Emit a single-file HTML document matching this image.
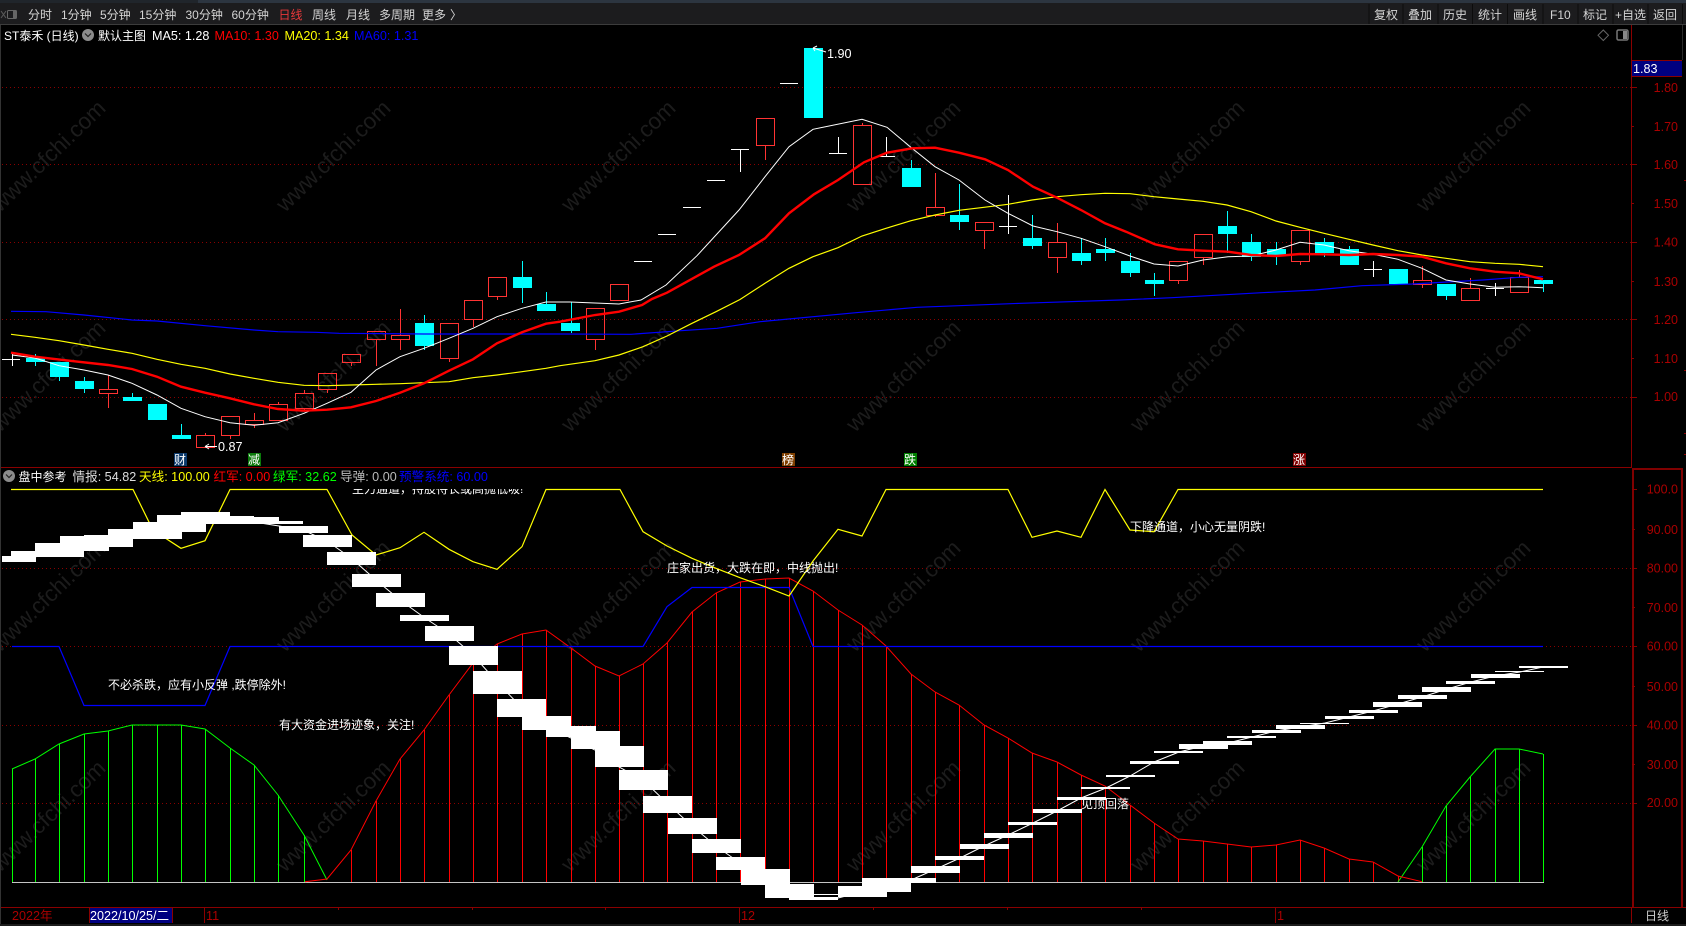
<!DOCTYPE html>
<html lang="zh"><head><meta charset="utf-8"><title>ST泰禾</title>
<style>
html,body{margin:0;padding:0;background:#000;width:1686px;height:926px;overflow:hidden}
svg{position:absolute;left:0;top:0;display:block}
text{font-family:"Liberation Sans","Noto Sans CJK SC",sans-serif;font-size:12.6px;fill:#fff}
.tb text{font-size:12px;fill:#d4d4d4}
.ax text{font-size:12.5px;fill:#aa0000;text-anchor:end}
.wm text{font-size:22.5px;fill:#1c1c1c}
.sig text{font-size:12px;fill:#fff}
.lg text{font-size:12.6px}
.lg text.z{font-size:12px}
.c{shape-rendering:crispEdges}
</style></head><body>
<svg width="1686" height="926" viewBox="0 0 1686 926" xmlns="http://www.w3.org/2000/svg">
<rect width="1686" height="926" fill="#000"/>
<!-- watermark -->
<g class="wm">
<text transform="translate(0 213) rotate(-44)">www.cfchi.com</text><text transform="translate(285 213) rotate(-44)">www.cfchi.com</text><text transform="translate(570 213) rotate(-44)">www.cfchi.com</text><text transform="translate(855 213) rotate(-44)">www.cfchi.com</text><text transform="translate(1139 213) rotate(-44)">www.cfchi.com</text><text transform="translate(1425 213) rotate(-44)">www.cfchi.com</text>
<text transform="translate(0 433) rotate(-44)">www.cfchi.com</text><text transform="translate(285 433) rotate(-44)">www.cfchi.com</text><text transform="translate(570 433) rotate(-44)">www.cfchi.com</text><text transform="translate(855 433) rotate(-44)">www.cfchi.com</text><text transform="translate(1139 433) rotate(-44)">www.cfchi.com</text><text transform="translate(1425 433) rotate(-44)">www.cfchi.com</text>
<text transform="translate(0 653) rotate(-44)">www.cfchi.com</text><text transform="translate(285 653) rotate(-44)">www.cfchi.com</text><text transform="translate(570 653) rotate(-44)">www.cfchi.com</text><text transform="translate(855 653) rotate(-44)">www.cfchi.com</text><text transform="translate(1139 653) rotate(-44)">www.cfchi.com</text><text transform="translate(1425 653) rotate(-44)">www.cfchi.com</text>
<text transform="translate(0 873) rotate(-44)">www.cfchi.com</text><text transform="translate(285 873) rotate(-44)">www.cfchi.com</text><text transform="translate(570 873) rotate(-44)">www.cfchi.com</text><text transform="translate(855 873) rotate(-44)">www.cfchi.com</text><text transform="translate(1139 873) rotate(-44)">www.cfchi.com</text><text transform="translate(1425 873) rotate(-44)">www.cfchi.com</text>
</g>
<!-- grid -->
<path class="c" d="M2 87.5H1631M2 164.5H1631M2 242.5H1631M2 319.5H1631M2 397.5H1631M2 568.5H1631M2 646.5H1631M2 725.5H1631M2 803.5H1631" stroke="#8a0000" stroke-width="1" stroke-dasharray="1 3" fill="none"/>
<!-- candles: cyan -->
<path class="c" d="M35.5 354V366M59.5 362V381M84.5 377V393M132.5 393V401M181.5 424V439M424.5 315V350M522.5 261V303M546.5 292V311M571.5 302V333M911.5 160V187M959.5 184V230M1032.5 215V249M1081.5 238V265M1105.5 238V261M1130.5 253V277M1154.5 273V296M1227.5 211V253M1251.5 234V261M1276.5 242V265M1324.5 238V257M1349.5 246V265M1446.5 284V300M1543.5 280V292" stroke="#0ff" fill="none"/>
<g class="c" fill="#0ff">
<rect x="26" y="358" width="19" height="4"/><rect x="50" y="362" width="19" height="15"/><rect x="75" y="381" width="19" height="8"/><rect x="123" y="397" width="19" height="4"/><rect x="148" y="404" width="19" height="16"/><rect x="172" y="435" width="19" height="4"/><rect x="415" y="323" width="19" height="23"/><rect x="513" y="277" width="19" height="11"/><rect x="537" y="304" width="19" height="7"/><rect x="561" y="323" width="19" height="8"/><rect x="804" y="48" width="19" height="70"/><rect x="902" y="168" width="19" height="19"/><rect x="950" y="215" width="19" height="7"/><rect x="1023" y="238" width="19" height="8"/><rect x="1072" y="253" width="19" height="8"/><rect x="1096" y="249" width="19" height="4"/><rect x="1121" y="261" width="19" height="12"/><rect x="1145" y="280" width="19" height="4"/><rect x="1218" y="226" width="19" height="8"/><rect x="1242" y="242" width="19" height="15"/><rect x="1267" y="249" width="19" height="6"/><rect x="1315" y="242" width="19" height="11"/><rect x="1340" y="249" width="19" height="16"/><rect x="1389" y="269" width="19" height="15"/><rect x="1437" y="284" width="19" height="12"/><rect x="1534" y="280" width="19" height="4"/>
</g>
<!-- candles: red -->
<g class="c" fill="none" stroke="#ff3333">
<path d="M108.5 375V389M108.5 394V408M205.5 433V435M230.5 436V439M254.5 413V420M254.5 425V428M278.5 402V404M304.5 390V393M304.5 409V411M327.5 390V393M351.5 363V366M376.5 340V366M400.5 309V335M400.5 340V350M449.5 359V362M473.5 319V327M497.5 297V300M595.5 340V350M765.5 146V160M862.5 123V125M935.5 173V207M935.5 216V217M984.5 231V249M1057.5 223V242M1057.5 258V273M1178.5 281V284M1203.5 258V265M1300.5 262V265M1422.5 266V280M1422.5 284V288M1470.5 278V288M1519.5 270V277"/>
<rect x="99.5" y="389.5" width="18" height="4"/><rect x="196.5" y="435.5" width="18" height="12"/><rect x="221.5" y="416.5" width="18" height="19"/><rect x="245.5" y="420.5" width="18" height="4"/><rect x="269.5" y="404.5" width="18" height="16"/><rect x="295.5" y="393.5" width="18" height="15"/><rect x="318.5" y="373.5" width="18" height="16"/><rect x="342.5" y="354.5" width="18" height="8"/><rect x="367.5" y="331.5" width="18" height="8"/><rect x="391.5" y="335.5" width="18" height="4"/><rect x="440.5" y="323.5" width="18" height="35"/><rect x="464.5" y="300.5" width="18" height="19"/><rect x="488.5" y="277.5" width="18" height="19"/><rect x="586.5" y="308.5" width="18" height="31"/><rect x="610.5" y="284.5" width="18" height="16"/><rect x="756.5" y="118.5" width="18" height="27"/><rect x="853.5" y="125.5" width="18" height="59"/><rect x="926.5" y="207.5" width="18" height="8"/><rect x="975.5" y="222.5" width="18" height="8"/><rect x="1048.5" y="242.5" width="18" height="15"/><rect x="1169.5" y="261.5" width="18" height="19"/><rect x="1194.5" y="234.5" width="18" height="23"/><rect x="1291.5" y="230.5" width="18" height="31"/><rect x="1413.5" y="280.5" width="18" height="4"/><rect x="1461.5" y="288.5" width="18" height="12"/><rect x="1510.5" y="277.5" width="18" height="15"/>
</g>
<!-- candles: white doji -->
<path class="c" d="M2 359.5H20M12.5 354V366M634 261.5H652M658 234.5H676M683 207.5H701M707 180.5H725M731 149.5H749M740.5 149V172M780 83.5H798M838.5 137V154M829 153.5H847M886.5 137V157M877 156.5H895M999 226.5H1017M1008.5 195V234M1364 269.5H1382M1373.5 261V277M1486 288.5H1504M1495.5 283V296" stroke="#fff" fill="none"/>
<!-- MA lines -->
<polyline fill="none" stroke="#0000ff" stroke-width="1.2" points="11,311.3 46,311.7 84,315 132,320 157,321 205,325.7 254,330 278,331.7 316,332.3 339,333.3 424,334 560,334 631,334.3 681,330.7 717,328.3 760,321.7 856,312.7 917,307.3 1021,303.3 1120,300 1172,297.7 1208,295.7 1262,292.7 1315,290 1362,285.7 1412,284 1483,280 1505,278.3 1519,277.3 1543,276.7"/>
<polyline fill="none" stroke="#ffff00" stroke-width="1.2" points="11,334.3 35,337.3 59,340.7 84,345 108,349.3 132,353.3 157,359.3 181,364.3 205,368.3 230,374 254,378.3 278,382.3 304,385.3 327,385.7 351,385 376,384.3 400,383.7 424,382.7 449,381.7 473,377.7 497,375 522,371.7 546,368.3 560,365.7 595,360.7 619,355 643,346.7 667,336 692,323.3 716,311.7 740,299.5 765,283.3 789,268.3 813,256.7 838,247.7 862,236 886,228.3 911,220.7 935,215 959,210.3 984,207.3 1008,204.3 1032,200 1057,196.7 1081,194.7 1105,193.3 1130,193.7 1154,196.7 1178,199 1203,201.3 1227,205 1251,211.7 1276,221 1300,227.3 1324,233.3 1349,239.3 1373,245 1398,250.7 1422,255 1446,258.3 1470,261.7 1495,263.3 1519,264.3 1543,266.7"/>
<polyline fill="none" stroke="#fff" stroke-width="1" points="12,355 35,358 59,365.7 84,370 108,375 132,383.3 157,395 181,408.3 205,416.7 230,422.7 254,425.3 278,422.7 304,413.3 327,403.3 351,392.3 376,370 400,356.7 424,348.3 449,338.3 473,328.3 497,316.7 522,308.3 546,302 570,302 595,303 619,304 641,300 666,285 697,255.7 739,210 765,176.7 789,146.7 813,129.3 862,119.3 887,127.3 912,148.3 935,166.7 959,180 985,200 1008,213.3 1033,226 1057,231.7 1081,238.3 1105,246.7 1130,256 1154,264 1178,266 1203,260 1228,256.7 1251,256 1276,250 1300,242.3 1324,245 1349,250.7 1373,254.3 1398,259.3 1422,268.3 1446,280 1470,284 1495,287.3 1519,286.7 1543,287.7"/>
<polyline fill="none" stroke="#ff0000" stroke-width="2.4" points="11,352.7 35,356.7 69,360.7 108,365 132,369 157,376.7 181,386.7 205,392.7 230,398.3 254,404.3 278,409 304,410.7 327,409.7 351,407.3 376,401 400,392.7 424,383.3 449,370.7 473,359.3 497,343.3 522,332.3 546,323.7 560,321.7 595,315 619,311.7 642,305 652,299 667,292.7 714,266.7 739,255 765,238.3 789,213.3 814,194.3 838,180 864,162.3 887,152.7 912,148.3 935,147.7 959,152.7 985,159.3 1008,170 1033,186.7 1057,197.7 1081,210 1105,223.3 1126,231.7 1155,244.3 1178,249.3 1203,250.7 1228,251.7 1251,255 1276,256 1300,254 1324,254.3 1349,255 1373,254 1398,255 1422,256.7 1446,263.3 1470,268.3 1495,271.7 1519,273.3 1543,279.3"/>
<!-- price labels in chart -->
<path d="M813 48L826 52M813 48L817 46M813 48L815 51M205 446.5H217M205 446.5L209 444M205 446.5L209 449" stroke="#fff" fill="none"/>
<text x="827" y="58">1.90</text>
<text x="218" y="451">0.87</text>
<!-- signal marks -->
<g class="c"><rect x="174" y="453" width="13" height="13" fill="#0c3a6c"/><rect x="248" y="453" width="13" height="13" fill="#0a7a0a"/><rect x="782" y="453" width="13" height="13" fill="#7f3f00"/><rect x="904" y="453" width="13" height="13" fill="#007f00"/><rect x="1293" y="453" width="13" height="13" fill="#800000"/></g>
<g class="sig"><text x="174" y="464">财</text><text x="248" y="464">减</text><text x="782" y="464">榜</text><text x="904" y="464">跌</text><text x="1293" y="464">涨</text></g>
<!-- pane divider -->
<path class="c" d="M0 467.5H1632" stroke="#8a0000"/>
<!-- indicator: red bars -->
<path class="c" fill="none" stroke="#ff0000" d="M351.5 850V882M376.5 801V882M400.5 759V882M424.5 730V882M449.5 695V882M473.5 663V882M497.5 644V882M522.5 634V882M546.5 630V882M571.5 648V882M595.5 666V882M619.5 676V882M643.5 664V882M667.5 643V882M692.5 612V882M716.5 593V882M740.5 582V882M765.5 579V882M789.5 578V882M813.5 591V882M838.5 610V882M862.5 625V882M886.5 646V882M911.5 674V882M935.5 692V882M959.5 705V882M984.5 725V882M1008.5 738V882M1032.5 753V882M1057.5 762V882M1081.5 775V882M1105.5 786V882M1130.5 805V882M1154.5 823V882M1178.5 839V882M1203.5 841V882M1227.5 844V882M1251.5 847V882M1276.5 845V882M1300.5 840V882M1324.5 848V882M1349.5 859V882M1373.5 862V882M1398.5 876V882"/>
<!-- indicator: green bars -->
<path class="c" fill="none" stroke="#00ff00" d="M12.5 769V882M35.5 759V882M59.5 744V882M84.5 734V882M108.5 731V882M132.5 725V882M157.5 725V882M181.5 725V882M205.5 729V882M230.5 748V882M254.5 765V882M278.5 795V882M304.5 835V882M1422.5 847V882M1446.5 806V882M1470.5 777V882M1495.5 749V882M1519.5 749V882M1543.5 754V882"/>
<path class="c" d="M12 882.5H1544" stroke="#c4c4c4" stroke-width="1.4"/>
<polyline fill="none" stroke="#00ff00" points="12,769 35,759 59,744 84,734 108,731 132,725 157,725 181,725 205,729 230,748 254,765 278,795 304,835 327,880"/>
<polyline fill="none" stroke="#00ff00" points="1398,882 1422,847 1446,806 1470,777 1495,749 1519,749 1543,754"/>
<polyline fill="none" stroke="#ff0000" points="305,881.7 327,879 351,850 376,801 400,759 424,730 449,695 473,663 497,644 522,634 546,630 571,648 595,666 619,676 643,664 667,643 692,612 716,593 740,582 765,579 789,578 813,591 838,610 862,625 886,646 911,674 935,692 959,705 984,725 1008,738 1032,753 1057,762 1081,775 1105,786 1130,805 1154,823 1178,839 1203,841 1227,844 1251,847 1276,845 1300,840 1324,848 1349,859 1373,862 1398,876 1422,881.7"/>
<polyline fill="none" stroke="#0000ff" stroke-width="1.2" points="12,646.5 59,646.5 84,705.5 205,705.5 230,646.5 643,646.5 667,606.7 692,587.5 789,587.5 813,646.5 1543,646.5"/>
<polyline fill="none" stroke="#ffff00" stroke-width="1.2" points="11,489.5 133,489.5 149,522 157.5,533 181,548.3 205,540.7 230,489.5 327,489.5 352,535 376,555 400,547.7 424,532.3 449,549.3 473,561.7 497,569.3 522,546.7 546,489.5 620,489.5 643,531.7 667,546 692,558.3 716,568.3 740,577.7 765,586.7 789,596 813,561 838,529.3 862,536 886,489.5 1008,489.5 1032,537.3 1057,531 1081,537.3 1105,489.5 1130,530 1154,531.7 1178,489.5 1543,489.5"/>
<!-- indicator: signal text under blocks -->
<g class="sig">
<svg x="0" y="489" width="1632" height="12"><text x="352" y="4">主力通道，持股待长或高抛低吸!</text></svg>
<text x="108" y="689">不必杀跌，应有小反弹 ,跌停除外!</text>
<text x="279" y="729">有大资金进场迹象，关注!</text>
<text x="667" y="572">庄家出货，大跌在即，中线抛出!</text>
<text x="1130" y="531">下降通道，小心无量阴跌!</text>
<text x="1081" y="808">见顶回落</text>
</g>
<!-- white blocks -->
<polyline fill="none" stroke="#fff" points="12,559 35,557 60,550 84,543 108,538 132,535 157,530 181,523 205,518 230,520 254,522 279,526 303,530 327,541 351,558 376,580 400,600 425,618 449,634 473,655 497,682 522,708 546,726 571,738 595,750 619,767 643,780 668,804 692,826 716,846 740,863 765,877 789,892 813,899 838,898 862,892 887,885 911,880 936,869 960,858 984,846 1008,835 1033,823 1057,811 1081,798 1106,788 1130,776 1154,762 1179,752 1203,746 1228,743 1252,737 1276,731 1300,727 1325,723 1349,717 1373,711 1398,704 1422,697 1447,689 1471,682 1495,676 1520,672 1543,667"/>
<g class="c" fill="#fff">
<rect x="2" y="556" width="34" height="6"/><rect x="11" y="551" width="25" height="11"/><rect x="35" y="543" width="49" height="14"/><rect x="60" y="536" width="49" height="15"/><rect x="84" y="535" width="49" height="12"/><rect x="108" y="529" width="25" height="18"/><rect x="133" y="522" width="49" height="17"/><rect x="157" y="515" width="49" height="17"/><rect x="181" y="512" width="49" height="12"/><rect x="205" y="516" width="49" height="5"/><rect x="230" y="517" width="49" height="7"/><rect x="254" y="521" width="49" height="3"/><rect x="279" y="526" width="49" height="7"/><rect x="303" y="535" width="49" height="12"/><rect x="327" y="552" width="49" height="13"/><rect x="352" y="574" width="49" height="13"/><rect x="376" y="593" width="49" height="14"/><rect x="400" y="615" width="49" height="6"/><rect x="425" y="626" width="49" height="15"/><rect x="449" y="646" width="49" height="19"/><rect x="473" y="671" width="49" height="23"/><rect x="497" y="699" width="49" height="18"/><rect x="522" y="716" width="49" height="14"/><rect x="546" y="716" width="25" height="21"/><rect x="571" y="726" width="25" height="23"/><rect x="595" y="731" width="25" height="36"/><rect x="620" y="746" width="24" height="21"/><rect x="619" y="770" width="49" height="20"/><rect x="643" y="796" width="49" height="17"/><rect x="668" y="818" width="49" height="16"/><rect x="692" y="839" width="49" height="14"/><rect x="716" y="857" width="49" height="13"/><rect x="741" y="869" width="49" height="16"/><rect x="765" y="885" width="49" height="13"/><rect x="789" y="884" width="25" height="16"/><rect x="814" y="897" width="24" height="3"/><rect x="814" y="894" width="24" height="1"/><rect x="838" y="886" width="49" height="11"/><rect x="862" y="883" width="25" height="14"/><rect x="862" y="878" width="49" height="14"/><rect x="911" y="878" width="25" height="5"/><rect x="911" y="866" width="49" height="7"/><rect x="935" y="856" width="49" height="4"/><rect x="960" y="844" width="49" height="5"/><rect x="984" y="833" width="49" height="5"/><rect x="1008" y="822" width="49" height="3"/><rect x="1033" y="809" width="49" height="4"/><rect x="1057" y="797" width="49" height="3"/><rect x="1081" y="787" width="49" height="2"/><rect x="1106" y="775" width="49" height="2"/><rect x="1130" y="761" width="49" height="3"/><rect x="1154" y="751" width="49" height="2"/><rect x="1179" y="744" width="49" height="5"/><rect x="1203" y="741" width="49" height="4"/><rect x="1227" y="736" width="49" height="2"/><rect x="1252" y="730" width="49" height="3"/><rect x="1276" y="725" width="49" height="4"/><rect x="1300" y="723" width="49" height="1"/><rect x="1325" y="716" width="49" height="3"/><rect x="1349" y="710" width="49" height="3"/><rect x="1373" y="702" width="49" height="5"/><rect x="1398" y="695" width="49" height="4"/><rect x="1422" y="687" width="49" height="5"/><rect x="1446" y="681" width="49" height="3"/><rect x="1471" y="674" width="49" height="4"/><rect x="1495" y="671" width="49" height="1"/><rect x="1519" y="666" width="49" height="2"/>
</g>
<!-- top bar -->
<rect class="c" x="0" y="0" width="1686" height="3" fill="#2c3540"/>
<rect class="c" x="0" y="0" width="198" height="3" fill="#20252b"/>
<rect class="c" x="0" y="3" width="1686" height="21" fill="#1c1c1e"/>
<rect class="c" x="0" y="24" width="1686" height="1" fill="#3c3c3c"/>
<path d="M1 11L6 18M6 11L1 18" fill="none" stroke="#5c5c5c"/>
<rect x="7.5" y="10.5" width="9" height="8" rx="1" fill="none" stroke="#666"/><rect x="13" y="11" width="3" height="7" fill="#666"/>
<g class="tb">
<text x="28" y="19">分时</text><text x="61" y="19">1分钟</text><text x="100" y="19">5分钟</text><text x="139" y="19">15分钟</text><text x="185.500" y="19">30分钟</text><text x="231.500" y="19">60分钟</text><text x="278.500" y="19" style="fill:#e8383a">日线</text><text x="312" y="19">周线</text><text x="346" y="19">月线</text><text x="379" y="19">多周期</text><text x="422" y="19">更多</text><text x="450" y="19">〉</text>
<text x="1374" y="19">复权</text><text x="1408" y="19">叠加</text><text x="1443" y="19">历史</text><text x="1478" y="19">统计</text><text x="1513" y="19">画线</text><text x="1550" y="19">F10</text><text x="1583" y="19">标记</text><text x="1615" y="19">+自选</text><text x="1653" y="19">返回</text>
</g>
<path class="c" d="M1369 4V24M1403 4V24M1438 4V24M1472.500 4V24M1507.500 4V24M1543 4V24M1578 4V24M1613 4V24M1648 4V24M1682.500 4V24" stroke="#0c0c0c" fill="none"/>
<!-- legends -->
<g class="lg">
<text class="z" x="4" y="40">ST泰禾 (日线)</text>
<circle cx="88" cy="35" r="6" fill="#8c8c8c"/><path d="M85 33.500L88 36.500L91 33.500" stroke="#222" fill="none" stroke-width="1.200"/>
<text class="z" x="98" y="40">默认主图</text>
<text x="152" y="40">MA5: 1.28</text>
<text x="214.500" y="40" style="fill:#f00">MA10: 1.30</text>
<text x="284.500" y="40" style="fill:#ff0">MA20: 1.34</text>
<text x="354" y="40" style="fill:#00f">MA60: 1.31</text>
<circle cx="9" cy="476" r="6" fill="#8c8c8c"/><path d="M6 474.500L9 477.500L12 474.500" stroke="#222" fill="none" stroke-width="1.200"/>
<text class="z" x="18.500" y="481">盘中参考</text>
<text x="72.500" y="481" style="fill:#ddd">情报: 54.82</text>
<text x="139" y="481" style="fill:#ff0">天线: 100.00</text>
<text x="213.500" y="481" style="fill:#f00">红军: 0.00</text>
<text x="273" y="481" style="fill:#0f0">绿军: 32.62</text>
<text x="340" y="481" style="fill:#bbb">导弹: 0.00</text>
<text x="399" y="481" style="fill:#00f">预警系统: 60.00</text>
</g>
<path d="M1603.300 30L1608.500 35.300L1603.300 40.500L1598 35.300Z" fill="none" stroke="#666"/>
<rect x="1617" y="30" width="11" height="10" rx="1.500" fill="none" stroke="#777" stroke-width="1.500"/><rect x="1623" y="31" width="4" height="8" fill="#888"/>
<!-- right axis -->
<path class="c" d="M1631.500 25V467M1631 87.500H1637M1631 126.500H1634M1631 164.500H1637M1631 203.500H1634M1631 242.500H1637M1631 281.500H1634M1631 319.500H1637M1631 358.500H1634M1631 397.500H1637" stroke="#8a0000" fill="none"/>
<path class="c" d="M1684 180.500H1686M1684 370.500H1686M1684 433.500H1686M1684 454.500H1686" stroke="#8a0000" fill="none"/>
<path class="c" d="M1682.500 25V60" stroke="#2a2a2a"/>
<rect class="c" x="1632" y="61" width="50" height="15" fill="#000080"/>
<path class="c" d="M1632 60.500H1682M1632 76.500H1682" stroke="#8a0000"/>
<text x="1633" y="73">1.83</text>
<path class="c" d="M1633 907V469H1682V907" fill="none" stroke="#800000" stroke-width="2"/>
<path class="c" d="M1632 489.500H1637M1632 529.500H1635M1632 568.500H1637M1632 607.500H1635M1632 646.500H1637M1632 686.500H1635M1632 725.500H1637M1632 764.500H1635M1632 803.500H1637" stroke="#8a0000" fill="none"/>
<g class="ax">
<text x="1678" y="92">1.80</text><text x="1678" y="131">1.70</text><text x="1678" y="169">1.60</text><text x="1678" y="208">1.50</text><text x="1678" y="246.500">1.40</text><text x="1678" y="286">1.30</text><text x="1678" y="324">1.20</text><text x="1678" y="363">1.10</text><text x="1678" y="401">1.00</text>
<text x="1678" y="493.500">100.0</text><text x="1678" y="534">90.00</text><text x="1678" y="572.500">80.00</text><text x="1678" y="612">70.00</text><text x="1678" y="650.500">60.00</text><text x="1678" y="691">50.00</text><text x="1678" y="729.500">40.00</text><text x="1678" y="769">30.00</text><text x="1678" y="807">20.00</text>
</g>
<!-- bottom axis -->
<path class="c" d="M0 907.500H1686" stroke="#8a0000"/>
<path class="c" d="M204.500 908V923M739.500 908V923M1275.500 908V923M1631.500 908V923M338.500 908V910M472.500 908V910M605.500 908V910M873.500 908V910M1007.500 908V910M1141.500 908V910" stroke="#8a0000" fill="none"/>
<rect class="c" x="89" y="908" width="84" height="15" fill="#000080"/>
<path class="c" d="M89.500 908V923M172.500 908V923" stroke="#8a0000" fill="none"/>
<g style="font-size:12.600px">
<text x="12" y="920" style="fill:#aa0000">2022年</text>
<text x="90" y="920">2022/10/25/二</text>
<text x="206" y="920" style="fill:#aa0000">11</text>
<text x="741" y="920" style="fill:#aa0000">12</text>
<text x="1277" y="920" style="fill:#aa0000">1</text>
<text x="1645" y="920" style="fill:#ccc;font-size:12px">日线</text>
</g>
<rect class="c" x="0" y="924" width="1686" height="2" fill="#1c1c1c"/>
<rect class="c" x="0" y="25" width="1" height="899" fill="#333"/>
</svg>
</body></html>
